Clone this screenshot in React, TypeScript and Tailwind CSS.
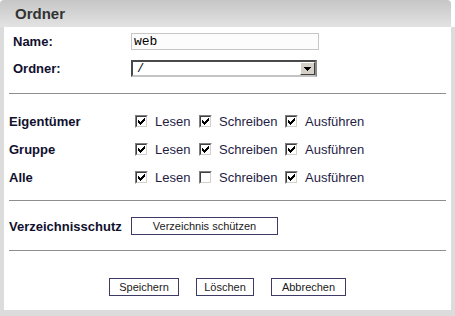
import React from 'react';

type Perm = { label: string; read: boolean; write: boolean; exec: boolean };

const perms: Perm[] = [
  { label: 'Eigentümer', read: true, write: true, exec: true },
  { label: 'Gruppe', read: true, write: true, exec: true },
  { label: 'Alle', read: true, write: false, exec: true },
];

const Check: React.FC<{ checked: boolean }> = ({ checked }) => (
  <span className="w-[13px] h-[13px] shrink-0 border border-t-[#808080] border-l-[#808080] border-b-white border-r-white">
    <span className="flex items-center justify-center w-full h-full bg-white border border-t-[#404040] border-l-[#404040] border-b-[#d4d0c8] border-r-[#d4d0c8]">
      {checked && (
        <svg width="7" height="7" viewBox="0 0 7 7" shapeRendering="crispEdges">
          <path
            d="M6 0h1v1h-1zM5 1h2v1h-2zM0 2h1v1h-1zM4 2h3v1h-3zM0 3h2v1h-2zM3 3h3v1h-3zM0 4h5v1h-5zM1 5h3v1h-3zM2 6h1v1h-1z"
            fill="#000"
          />
        </svg>
      )}
    </span>
  </span>
);

const CheckItem: React.FC<{ checked: boolean; text: string; width: string }> = ({ checked, text, width }) => (
  <label className={`flex items-center gap-[7px] ${width}`}>
    <Check checked={checked} />
    <span className="text-[13px] text-[#1f1d45]">{text}</span>
  </label>
);

const Divider = ({ mt }: { mt: string }) => <div className={`h-px bg-[#8e8e8e] ${mt}`} />;

const App: React.FC = () => {
  return (
    <div className="w-[455px] h-[316px] bg-white font-['Liberation_Sans',Arial,sans-serif] leading-none">
      <div className="w-[451px] h-[27px] rounded-t-[4px] bg-linear-to-b from-[#c6c6c6] to-[#e3e3e3] pl-[15px] flex items-center text-[15px] font-bold text-[#333]">
        Ordner
      </div>
      <div className="w-[455px] h-[289px] bg-[#dcdcdc] px-[4px] pb-[6px]">
        <div className="h-full bg-white px-[5px] pt-[6px]">
          {/* Name / Ordner */}
          <div className="pl-[4px]">
            <div className="flex items-center h-[17px]">
              <div className="w-[118px] text-[13px] font-bold text-[#10102e]">Name:</div>
              <div className="w-[188px] h-[17px] border border-[#c6c6c6] bg-[#fcfcfc] pl-[2px] flex items-center font-['Liberation_Mono','Courier_New',monospace] text-[13px] text-black">
                web
              </div>
            </div>
            <div className="flex items-center h-[17px] mt-[10px]">
              <div className="w-[118px] text-[13px] font-bold text-[#10102e]">Ordner:</div>
              <div className="w-[186px] h-[17px] flex border-2 border-t-[#4a4a4a] border-l-[#4a4a4a] border-r-[#8a8a8a] border-b-[#c4c4c4] bg-white">
                <div className="flex-1 flex items-center pl-[4px] text-[12px] font-['Liberation_Mono',monospace] text-black">/</div>
                <div className="w-[15px] h-full bg-[#d4d0c8] border border-t-white border-l-white border-b-[#404040] border-r-[#404040] flex items-center justify-center">
                  <svg width="7" height="4" viewBox="0 0 7 4" shapeRendering="crispEdges">
                    <path d="M0 0h7v1h-7zM1 1h5v1h-5zM2 2h3v1h-3zM3 3h1v1h-1z" fill="#000" />
                  </svg>
                </div>
              </div>
            </div>
          </div>

          <Divider mt="mt-[16px]" />

          {/* Rechte */}
          <div className="mt-[13px]">
            {perms.map((p) => (
              <div key={p.label} className="flex items-center h-[28px]">
                <div className="w-[122px] text-[13px] font-bold text-[#10102e]">{p.label}</div>
                <div className="flex items-center pl-[4px]">
                  <CheckItem checked={p.read} text="Lesen" width="w-[64px]" />
                  <CheckItem checked={p.write} text="Schreiben" width="w-[86px]" />
                  <CheckItem checked={p.exec} text="Ausführen" width="w-[80px]" />
                </div>
              </div>
            ))}
          </div>

          <Divider mt="mt-[9px]" />

          <div className="flex items-center mt-[16px] h-[18px]">
            <div className="w-[122px] text-[13px] font-bold text-[#10102e]">Verzeichnisschutz</div>
            <button className="w-[147px] h-[18px] border border-[#3d3b64] bg-white text-[11px] text-[#1a1a1a]">
              Verzeichnis schützen
            </button>
          </div>

          <Divider mt="mt-[15px]" />

          <div className="flex justify-center gap-[17px] mt-[27px]">
            <button className="w-[70px] h-[18px] border border-[#3d3b64] bg-white text-[11px] text-[#1a1a1a]">Speichern</button>
            <button className="w-[58px] h-[18px] border border-[#3d3b64] bg-white text-[11px] text-[#1a1a1a]">Löschen</button>
            <button className="w-[75px] h-[18px] border border-[#3d3b64] bg-white text-[11px] text-[#1a1a1a]">Abbrechen</button>
          </div>
        </div>
      </div>
    </div>
  );
};

export default App;
